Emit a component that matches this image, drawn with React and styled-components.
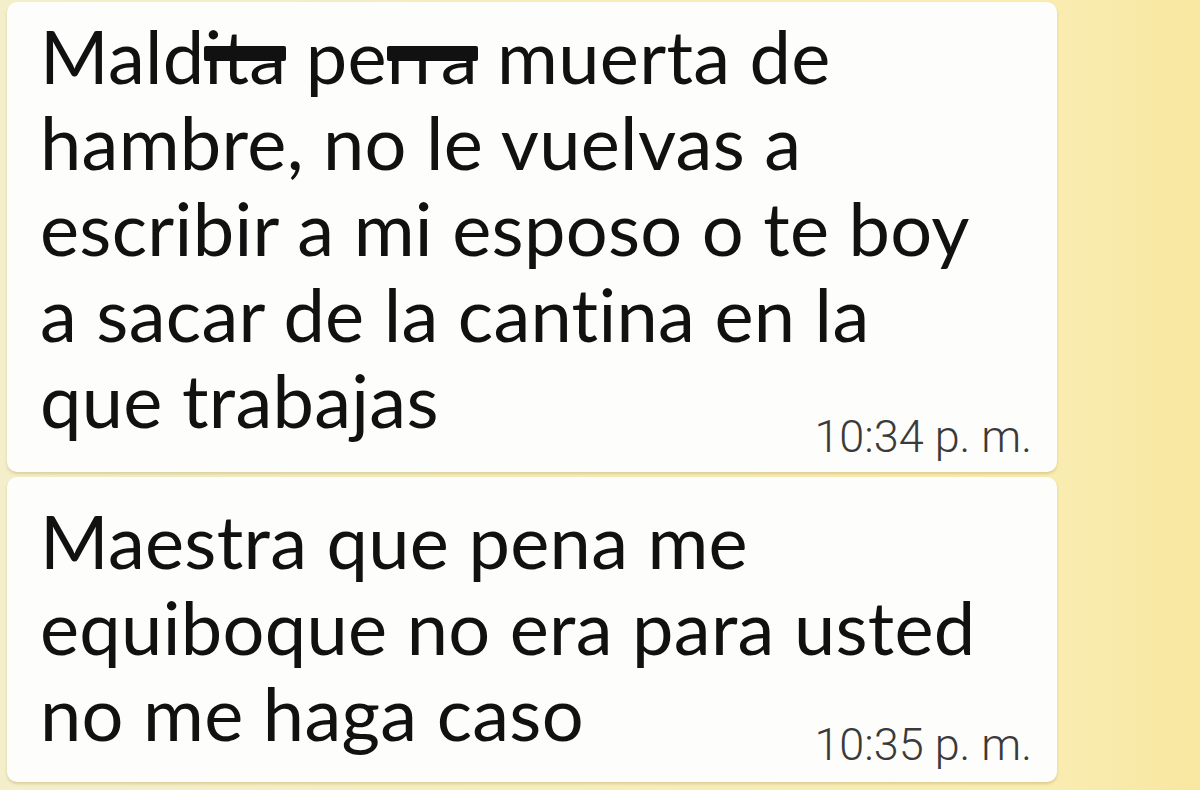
import React from "react";
import styled, { createGlobalStyle } from "styled-components";

const Global = createGlobalStyle`
  html, body { margin: 0; padding: 0; }
  body {
    width: 1200px;
    height: 790px;
    overflow: hidden;
    background: #f8e9a2;
    font-family: Lato, "Open Sans", sans-serif;
  }
`;

const Screen = styled.div`
  width: 1200px;
  height: 790px;
  box-sizing: border-box;
  padding: 2px 143px 0 7px;
  display: flex;
  flex-direction: column;
  gap: 5px;
  background: linear-gradient(90deg, #f4eecb 0px, #f4eecb 7px, #f9ecb0 1060px, #f8e7a0 1200px);
`;

const Bubble = styled.div`
  background: #fdfdfb;
  border-radius: 10px;
  box-shadow: 0 2px 3px rgba(170, 150, 80, 0.35);
  padding: ${(p) => p.$pad};
  display: flex;
  flex-direction: column;
`;

const Body = styled.div`
  font-size: 74px;
  line-height: 86px;
  color: #111;
  letter-spacing: 0.3px;
  font-variant-ligatures: none;
`;

const Censored = styled.span`
  position: relative;
  &::after {
    content: "";
    position: absolute;
    left: 0;
    right: 0;
    top: 35px;
    height: 15px;
    background: #111;
    border-radius: 2px;
  }
`;

const Time = styled.div`
  align-self: flex-end;
  margin-top: ${(p) => p.$lift}px;
  margin-right: 25px;
  font-family: Roboto, sans-serif;
  font-weight: 300;
  font-size: 45px;
  line-height: 45px;
  color: #3a3a3a;
`;

export default function App() {
  return (
    <>
      <Global />
      <Screen>
        <Bubble $pad="11px 0 13px 33px">
          <Body>
            Mald<Censored>ita</Censored> pe<Censored>rra</Censored> muerta de
            <br />
            hambre, no le vuelvas a
            <br />
            escribir a mi esposo o te boy
            <br />
            a sacar de la cantina en la
            <br />
            que trabajas
          </Body>
          <Time $lift={-29}>10:34 p. m.</Time>
        </Bubble>
        <Bubble $pad="21px 0 15px 33px">
          <Body>
            Maestra que pena me
            <br />
            equiboque no era para usted
            <br />
            no me haga caso
          </Body>
          <Time $lift={-34}>10:35 p. m.</Time>
        </Bubble>
      </Screen>
    </>
  );
}
